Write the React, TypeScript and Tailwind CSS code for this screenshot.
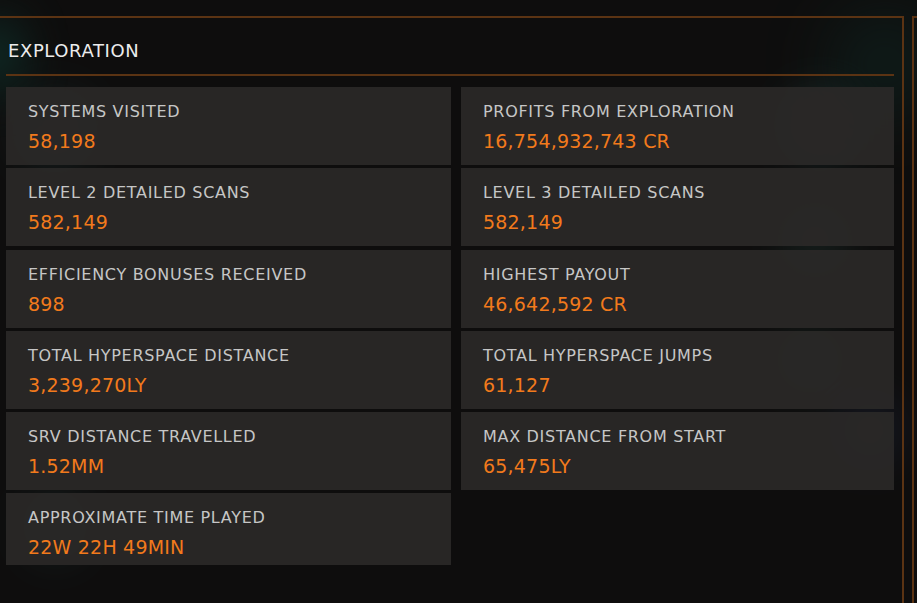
import React from 'react';

type Stat = { label: string; value: string };

const left: Stat[] = [
  { label: 'SYSTEMS VISITED', value: '58,198' },
  { label: 'LEVEL 2 DETAILED SCANS', value: '582,149' },
  { label: 'EFFICIENCY BONUSES RECEIVED', value: '898' },
  { label: 'TOTAL HYPERSPACE DISTANCE', value: '3,239,270LY' },
  { label: 'SRV DISTANCE TRAVELLED', value: '1.52MM' },
  { label: 'APPROXIMATE TIME PLAYED', value: '22W 22H 49MIN' },
];

const right: Stat[] = [
  { label: 'PROFITS FROM EXPLORATION', value: '16,754,932,743 CR' },
  { label: 'LEVEL 3 DETAILED SCANS', value: '582,149' },
  { label: 'HIGHEST PAYOUT', value: '46,642,592 CR' },
  { label: 'TOTAL HYPERSPACE JUMPS', value: '61,127' },
  { label: 'MAX DISTANCE FROM START', value: '65,475LY' },
];

function StatCard({ stat, short }: { stat: Stat; short?: boolean }) {
  return (
    <div
      className={`flex flex-col bg-[#2a2827]/95 pl-[22px] pt-[15px] ${short ? 'h-[72px]' : 'h-[78px]'}`}
    >
      <span className="text-[16px] leading-[20px] tracking-[0.7px] text-[#c6c6c6]">{stat.label}</span>
      <span className="mt-[7px] text-[19px] leading-[24px] tracking-[0.2px] text-[#f27a1c]">{stat.value}</span>
    </div>
  );
}

export default function App() {
  return (
    <div
      className="relative h-[603px] w-[917px] overflow-hidden bg-[#0e0d0d]"
      style={{ fontFamily: '"DejaVu Sans", "Liberation Sans", sans-serif' }}
    >
      {/* soft background glows showing through the panels */}
      <div className="pointer-events-none absolute left-[840px] top-[20px] h-[90px] w-[90px] rounded-full bg-[#0f4a40] opacity-40 blur-2xl" />
      <div className="pointer-events-none absolute left-[790px] top-[95px] h-[60px] w-[60px] rounded-full bg-[#3a6a66] opacity-40 blur-xl" />
      <div className="pointer-events-none absolute left-[20px] top-[95px] h-[70px] w-[70px] rounded-full bg-[#2e5a58] opacity-30 blur-xl" />
      <div className="pointer-events-none absolute left-[-30px] top-[20px] h-[70px] w-[50px] rounded-full bg-[#0f4a40] opacity-60 blur-xl" />
      <div className="pointer-events-none absolute left-[785px] top-[210px] h-[60px] w-[60px] rounded-full bg-[#2e5a50] opacity-30 blur-xl" />
      <div className="pointer-events-none absolute left-[780px] top-[330px] h-[60px] w-[60px] rounded-full bg-[#2e5a50] opacity-25 blur-xl" />
      <div className="pointer-events-none absolute left-[840px] top-[400px] h-[60px] w-[60px] rounded-full bg-[#2e3f6a] opacity-30 blur-xl" />
      <div className="pointer-events-none absolute left-[30px] top-[490px] h-[70px] w-[50px] rounded-full bg-[#2e5a58] opacity-25 blur-xl" />

      <div className="relative flex h-full pt-[16px]">
        <div className="flex w-[904px] flex-col border-r-2 border-t-2 border-[#5b3313]">
          <div className="pl-[8px] pt-[21px] text-[18px] leading-[24px] tracking-[0.6px] text-[#ececec]">
            EXPLORATION
          </div>
          <div className="ml-[6px] mt-[11px] h-[2px] w-[888px] bg-[#5b3313]" />
          <div className="ml-[6px] mt-[11px] flex gap-[10px]">
            <div className="flex w-[445px] flex-col gap-[3.25px]">
              {left.map((s, i) => (
                <StatCard key={s.label} stat={s} short={i === left.length - 1} />
              ))}
            </div>
            <div className="flex w-[433px] flex-col gap-[3.25px]">
              {right.map((s) => (
                <StatCard key={s.label} stat={s} />
              ))}
            </div>
          </div>
        </div>
        <div className="ml-[8px] flex-1 border-l-2 border-t-2 border-[#5b3313]" />
      </div>
    </div>
  );
}
